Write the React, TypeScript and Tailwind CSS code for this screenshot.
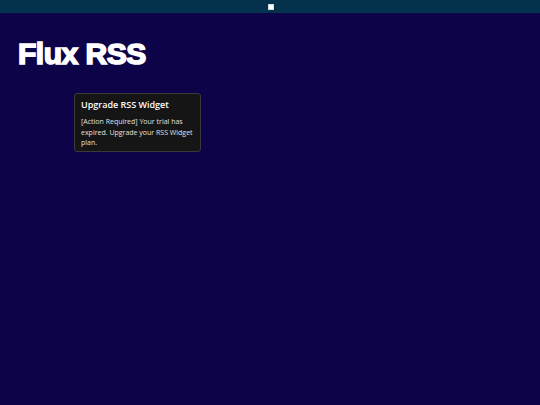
export default function App() {
  return (
    <div className="flex h-[405px] w-[540px] flex-col bg-[#0c0349] font-['Open_Sans',sans-serif]">
      <div className="flex h-[13px] items-center justify-center bg-[#04314b]">
        <div className="ml-[1px] h-[6px] w-[6px] border border-[#cfd8dc] bg-white" />
      </div>
      <div className="px-[18px] pt-[24px]">
        <h1 className="font-['Liberation_Sans',Arial,sans-serif] text-[30px] font-black leading-[34px] tracking-[-0.5px] text-white [-webkit-text-stroke:1.6px_white]">
          Flux RSS
        </h1>
      </div>
      <div className="ml-[74px] mt-[22px] w-[127px] rounded-[3px] border border-[#3a3a3a] bg-[#151515] px-[6px] pb-[2px] pt-[4px]">
        <div className="text-[9px] font-semibold leading-[14px] text-white">Upgrade RSS Widget</div>
        <p className="mt-[5px] text-[7px] leading-[10.5px] text-[#e0e0e0]">
          [Action Required] Your trial has expired. Upgrade your RSS Widget plan.
        </p>
      </div>
    </div>
  );
}
